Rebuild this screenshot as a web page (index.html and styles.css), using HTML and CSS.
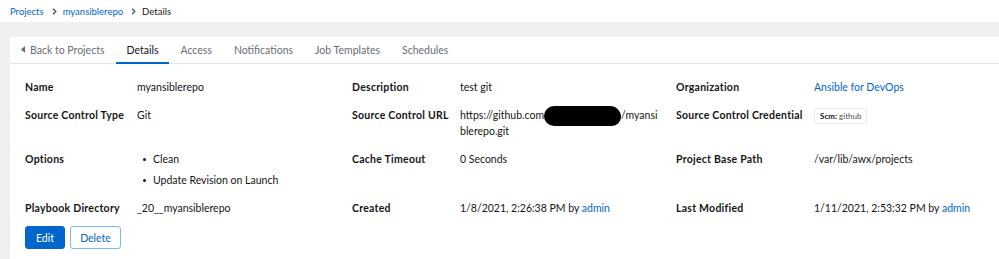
FILE: index.html
```html
<!DOCTYPE html>
<html>
<head lang="en">
    <meta charset="UTF-8">
    <title>myansiblerepo - Details</title>
    <link rel="stylesheet" href="styles.css">
</head>
<body>
<div class="crumbs">
    <a href="">Projects</a>
    <svg class="sep" width="5" height="7" viewBox="0 0 5 7"><path d="M1 0.8 L3.8 3.5 L1 6.2" fill="none" stroke="#4f5255" stroke-width="1.3"/></svg>
    <a href="">myansiblerepo</a>
    <svg class="sep" width="5" height="7" viewBox="0 0 5 7"><path d="M1 0.8 L3.8 3.5 L1 6.2" fill="none" stroke="#4f5255" stroke-width="1.3"/></svg>
    <span>Details</span>
</div>
<div class="page">
    <div class="card">
        <ul class="tabs">
            <li><a href=""><svg class="caret" width="4" height="7" viewBox="0 0 4 7"><path d="M4 0 L0 3.5 L4 7 Z" fill="#6a6e73"/></svg>Back to Projects</a></li>
            <li class="active"><a href="">Details</a></li>
            <li><a href="">Access</a></li>
            <li><a href="">Notifications</a></li>
            <li><a href="">Job Templates</a></li>
            <li><a href="">Schedules</a></li>
        </ul>
        <div class="body">
            <dl class="details">
                <dt>Name</dt>
                <dd>myansiblerepo</dd>
                <dt>Description</dt>
                <dd>test git</dd>
                <dt>Organization</dt>
                <dd><a href="">Ansible for DevOps</a></dd>

                <dt>Source Control Type</dt>
                <dd>Git</dd>
                <dt>Source Control URL</dt>
                <dd class="url">https://github.com<span class="hidden"></span>/myansi<br>blerepo.git</dd>
                <dt>Source Control Credential</dt>
                <dd><span class="chip"><b>Scm:</b> github</span></dd>

                <dt>Options</dt>
                <dd>
                    <ul class="opts">
                        <li>Clean</li>
                        <li>Update Revision on Launch</li>
                    </ul>
                </dd>
                <dt>Cache Timeout</dt>
                <dd>0 Seconds</dd>
                <dt>Project Base Path</dt>
                <dd>/var/lib/awx/projects</dd>

                <dt>Playbook Directory</dt>
                <dd>_20__myansiblerepo</dd>
                <dt>Created</dt>
                <dd>1/8/2021, 2:26:38 PM by <a href="">admin</a></dd>
                <dt>Last Modified</dt>
                <dd>1/11/2021, 2:53:32 PM by <a href="">admin</a></dd>
            </dl>
            <div class="actions">
                <button class="btn primary">Edit</button>
                <button class="btn secondary">Delete</button>
            </div>
        </div>
    </div>
</div>
</body>
</html>
```

FILE: styles.css
```css
*{margin:0;padding:0;box-sizing:border-box;}
html,body{min-height:100%;}
body{font-family:Lato,"Noto Sans",sans-serif;font-size:10.5px;color:#151515;background:#f0f0f0;display:flex;flex-direction:column;}
a{color:#0066cc;text-decoration:none;}
ul{list-style:none;}

.crumbs{flex-shrink:0;height:22px;background:#fff;padding-left:10px;display:flex;align-items:center;font-size:9.5px;}
.crumbs a{color:#0066cc;}
.crumbs .sep{margin:0 6px 0 8px;}

.page{flex:1;padding:15px 0 0 10px;display:flex;}
.card{flex:1;background:#fff;min-height:222px;}

.tabs{display:flex;height:27px;border-bottom:1px solid #e5e5e5;}
.tabs li{display:flex;}
.tabs a{display:flex;align-items:center;padding:0 11px;color:#6a6e73;border-bottom:2px solid transparent;margin-bottom:-1px;}
.tabs .active a{color:#151515;border-bottom-color:#0066cc;}
.tabs .caret{margin-right:5px;}

.body{padding:15px 0 0 15px;}
.details{display:grid;grid-template-columns:112px 215px 108px 216px 138px 1fr;row-gap:12px;line-height:16px;}
.details dt{font-weight:700;letter-spacing:0.25px;}
.details dd{color:#151515;}
.hidden{display:inline-block;width:77px;height:20px;margin:-4px 0;background:#000;border-radius:10px 11px 9px 10px;vertical-align:middle;}
.chip{display:inline-block;font-size:8px;line-height:12px;padding:1px 5px;border:1px solid #ececec;border-radius:3px;color:#4f5255;}
.chip b{font-weight:700;color:#151515;}
.opts li{padding-left:16px;position:relative;margin-bottom:5px;}
.opts li:last-child{margin-bottom:0;}
.opts li:before{content:"";position:absolute;left:6px;top:7px;width:3px;height:3px;border-radius:50%;background:#151515;}

.actions{display:flex;gap:5px;margin-top:10px;}
.btn{font-family:inherit;font-size:10.5px;height:23px;padding:0;border-radius:3px;cursor:pointer;}
.btn.primary{background:#0066cc;color:#fff;border:1px solid #0066cc;width:40px;}
.btn.secondary{background:#fff;color:#0066cc;border:1px solid #73bcf7;width:51px;}
```
